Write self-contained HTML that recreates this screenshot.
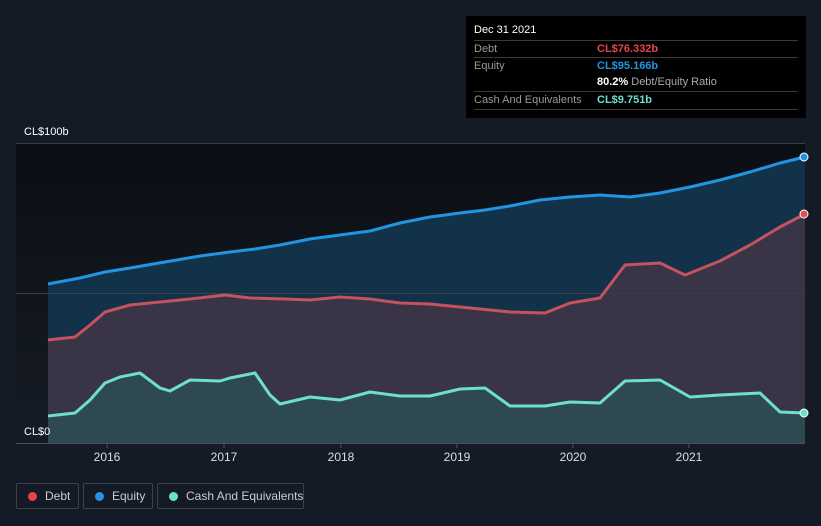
<!DOCTYPE html><html><head><style>
html,body{margin:0;width:821px;height:526px;overflow:hidden}
body{background:#151b26;font-family:"Liberation Sans",sans-serif;position:relative}
.tt{position:absolute;left:466px;top:16px;width:340px;height:102px;background:#000;color:#fff;font-size:11px}
.tt .r{position:absolute;left:8px;width:324px;border-top:1px solid #3a3a3a;height:16px;line-height:16px}
.tt .l{position:absolute;left:0;color:#999}.tt .v{position:absolute;left:123px;font-weight:bold;white-space:nowrap}
.lg{position:absolute;top:483px;height:26px;border:1px solid #3c424c;border-radius:2px;color:#ccc;font-size:12px;line-height:24px;box-sizing:border-box;white-space:nowrap}
.lg i{position:absolute;left:11px;top:8px;width:9px;height:9px;border-radius:50%}
.lg span{position:absolute;left:28px}
</style></head><body>
<svg width="821" height="526" style="position:absolute;left:0;top:0">
<defs><linearGradient id="bg" x1="0" y1="0" x2="0" y2="1"><stop offset="0" stop-color="#0b0e14"/><stop offset="1" stop-color="#161c26"/></linearGradient></defs>
<rect x="16" y="143" width="789" height="300" fill="url(#bg)"/>
<path d="M48,284 L80,278 105,272 130,268 165,262 200,256 230,252 255,249 280,245 310,239 340,235 370,231 400,223 430,217 460,213 485,210 510,206 540,200 570,197 600,195 630,197 660,193 690,187 720,180 750,172 780,163 805,157 L805,443 48,443Z" fill="#12324a"/>
<path d="M48,340 L75,337 90,325 105,312 130,305 160,302 190,299 225,295 250,298 285,299 310,300 340,297 370,299 400,303 430,304 460,307 480,309 510,312 545,313 570,303 600,298 625,265 660,263 685,275 720,261 750,245 780,227 805,214 L805,443 48,443Z" fill="#3a3447"/>
<path d="M48,416 L75,413 90,400 105,383 120,377 140,373 160,388 170,391 190,380 220,381 230,378 255,373 270,395 280,404 310,397 340,400 370,392 400,396 430,396 460,389 485,388 510,406 545,406 570,402 600,403 625,381 660,380 690,397 720,395 760,393 780,412 805,413 L805,443 48,443Z" fill="#2e4a50"/>
<line x1="16" y1="143.5" x2="805" y2="143.5" stroke="#3b3f46"/>
<line x1="16" y1="293.5" x2="805" y2="293.5" stroke="#3b3f46"/>
<line x1="16" y1="443.5" x2="805" y2="443.5" stroke="#4a4f57"/>
<g fill="none" stroke-width="3" stroke-linejoin="round">
<path d="M48,284 L80,278 105,272 130,268 165,262 200,256 230,252 255,249 280,245 310,239 340,235 370,231 400,223 430,217 460,213 485,210 510,206 540,200 570,197 600,195 630,197 660,193 690,187 720,180 750,172 780,163 805,157" stroke="#2394df"/>
<path d="M48,340 L75,337 90,325 105,312 130,305 160,302 190,299 225,295 250,298 285,299 310,300 340,297 370,299 400,303 430,304 460,307 480,309 510,312 545,313 570,303 600,298 625,265 660,263 685,275 720,261 750,245 780,227 805,214" stroke="#c4525f"/>
<path d="M48,416 L75,413 90,400 105,383 120,377 140,373 160,388 170,391 190,380 220,381 230,378 255,373 270,395 280,404 310,397 340,400 370,392 400,396 430,396 460,389 485,388 510,406 545,406 570,402 600,403 625,381 660,380 690,397 720,395 760,393 780,412 805,413" stroke="#6ce0cc"/>
</g>
<circle cx="804" cy="157" r="4" fill="#2394df" stroke="#fff"/>
<circle cx="804" cy="214" r="4" fill="#e84a52" stroke="#fff"/>
<circle cx="804" cy="413" r="4" fill="#6ce0cc" stroke="#fff"/>
<g stroke="#4a4f57"><line x1="107" y1="444" x2="107" y2="448"/><line x1="224" y1="444" x2="224" y2="448"/><line x1="341" y1="444" x2="341" y2="448"/><line x1="457" y1="444" x2="457" y2="448"/><line x1="573" y1="444" x2="573" y2="448"/><line x1="689" y1="444" x2="689" y2="448"/></g>
<g fill="#ddd" font-size="12" text-anchor="middle" font-family="Liberation Sans"><text x="107" y="461">2016</text><text x="224" y="461">2017</text><text x="341" y="461">2018</text><text x="457" y="461">2019</text><text x="573" y="461">2020</text><text x="689" y="461">2021</text></g>
<rect x="16" y="423" width="32" height="19" fill="#151b26"/>
<text x="24" y="435" fill="#fff" font-size="11" font-family="Liberation Sans">CL$0</text>
<text x="24" y="135" fill="#fff" font-size="11" font-family="Liberation Sans">CL$100b</text>
</svg>
<div class="tt">
<div style="position:absolute;left:8px;top:8px">Dec 31 2021</div>
<div class="r" style="top:24px"><span class="l">Debt</span><span class="v" style="color:#e8434b">CL$76.332b</span></div>
<div class="r" style="top:41px"><span class="l">Equity</span><span class="v" style="color:#2394df">CL$95.166b</span></div>
<div class="r" style="top:58px;border:0"><span class="v">80.2% <b style="color:#aaa;font-weight:normal">Debt/Equity Ratio</b></span></div>
<div class="r" style="top:75px"><span class="l">Cash And Equivalents</span><span class="v" style="color:#6ce0cc">CL$9.751b</span></div>
<div class="r" style="top:93px;height:0"></div>
</div>
<div class="lg" style="left:16px;width:63px"><i style="background:#e8434b"></i><span>Debt</span></div>
<div class="lg" style="left:83px;width:70px"><i style="background:#2394df"></i><span>Equity</span></div>
<div class="lg" style="left:157px;width:147px"><i style="background:#6ce0cc"></i><span>Cash And Equivalents</span></div>
</body></html>
